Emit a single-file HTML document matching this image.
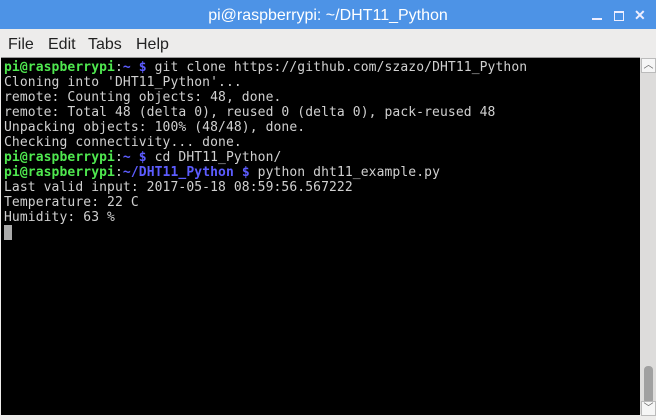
<!DOCTYPE html>
<html><head><style>
body{margin:0;width:656px;height:420px;overflow:hidden;background:#edeceb;font-family:"Liberation Sans",sans-serif;position:relative}
#t{position:absolute;left:0;top:0;width:656px;height:29px;background:#4d93e6;color:#fff;font-size:16px;text-align:center;line-height:31px}
#m{position:absolute;top:29px;left:0;width:656px;height:28px;background:#edeceb;font-size:16px;line-height:31px;color:#222}
#m span{position:absolute}
#term{position:absolute;left:1px;top:57px;width:639px;height:357px;background:#000;border-top:1px solid #999}
pre{margin:0;padding:2px 0 0 3px;font-family:"DejaVu Sans Mono","Liberation Mono",monospace;font-size:13px;line-height:15px;color:#d0d0d0;letter-spacing:0.1px}
.g{color:#4fe84f;font-weight:bold}.b{color:#5c5cff;font-weight:bold}
#sb{position:absolute;left:640px;top:58px;width:16px;height:356px;background:#dddcdb}
#th{position:absolute;left:644px;top:366px;width:9px;height:38px;background:#a0a0a0;border-radius:4px}
.ar{position:absolute;left:641px;width:13px;height:13px;background:#f6f6f6;border:1px solid #bbb;font-size:10px;text-align:center;line-height:13px;color:#666}
</style></head><body>
<div id="t">pi@raspberrypi: ~/DHT11_Python<span style="position:absolute;left:592px;top:18px;width:10px;height:2px;background:#eef"></span><span style="position:absolute;left:614px;top:11px;width:8px;height:7px;border:1px solid #eef;border-top-width:2px"></span><span style="position:absolute;left:634px;font-size:14px;font-weight:bold;color:#eef">✕</span></div>
<div id="m"><span style="left:8px">File</span><span style="left:48px">Edit</span><span style="left:88px">Tabs</span><span style="left:136px">Help</span></div>
<div id="term"><pre><span class="g">pi@raspberrypi</span>:<span class="b">~ $</span> git clone https://github.com/szazo/DHT11_Python
Cloning into 'DHT11_Python'...
remote: Counting objects: 48, done.
remote: Total 48 (delta 0), reused 0 (delta 0), pack-reused 48
Unpacking objects: 100% (48/48), done.
Checking connectivity... done.
<span class="g">pi@raspberrypi</span>:<span class="b">~ $</span> cd DHT11_Python/
<span class="g">pi@raspberrypi</span>:<span class="b">~/DHT11_Python $</span> python dht11_example.py
Last valid input: 2017-05-18 08:59:56.567222
Temperature: 22 C
Humidity: 63 %
<span style="background:#aaa">&nbsp;</span></pre></div>
<div id="sb"></div><div class="ar" style="top:58px">︿</div><div id="th"></div><div class="ar" style="top:401px">﹀</div>
</body></html>
